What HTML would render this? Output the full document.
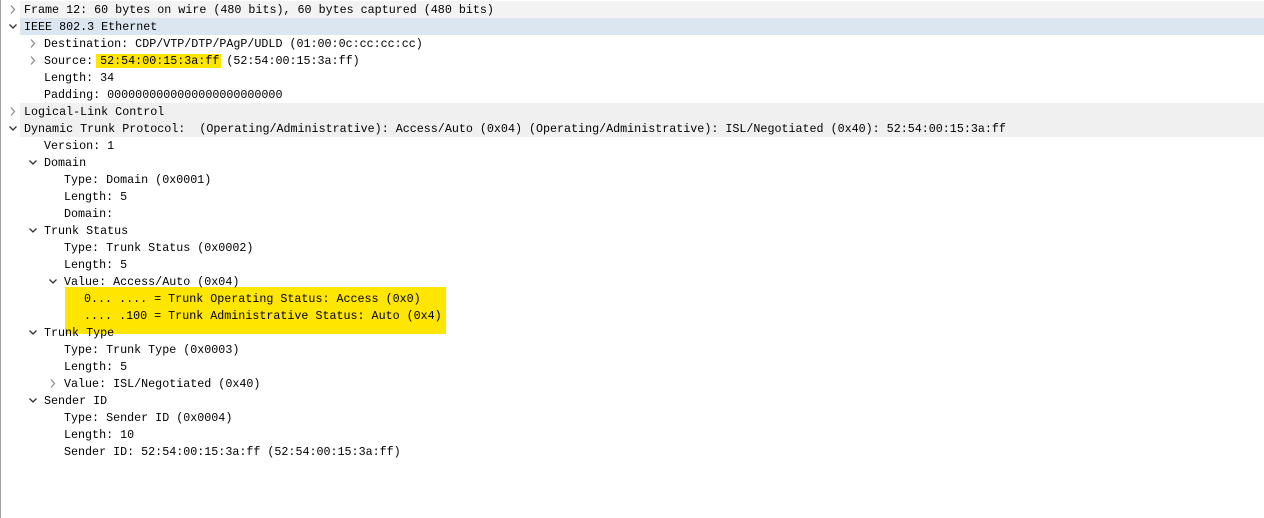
<!DOCTYPE html>
<html><head><style>
body{margin:0;width:1264px;height:518px;background:#fff;position:relative;overflow:hidden;font-family:"Liberation Mono",monospace;font-size:11.7px;color:#000}
.lb{position:absolute;left:0;top:0;width:1px;height:518px;background:#a0a0a0}
.r{position:absolute;left:0;height:17px;line-height:18px;white-space:pre;width:1264px}
.bg{position:absolute;left:20px;right:0;top:0;bottom:0}
.t{position:absolute;top:0}
.a{position:absolute;top:0;width:10px;height:17px}
.y{position:absolute;background:#ffe600}
</style></head><body>
<div class="lb"></div>
<div id="c"></div>
<div class="y" style="left:96px;top:54px;width:125px;height:14px;z-index:-1"></div>
<script>
var rows=[
[0,'Frame 12: 60 bytes on wire (480 bits), 60 bytes captured (480 bits)','c','#f3f3f3'],
[0,'IEEE 802.3 Ethernet','o','#dce6f0'],
[1,'Destination: CDP/VTP/DTP/PAgP/UDLD (01:00:0c:cc:cc:cc)','c'],
[1,'Source: <span style="background:#ffe600">52:54:00:15:3a:ff</span> (52:54:00:15:3a:ff)','c'],
[1,'Length: 34'],
[1,'Padding: 0000000000000000000000000'],
[0,'Logical-Link Control','c','#f0f0f0'],
[0,'Dynamic Trunk Protocol:  (Operating/Administrative): Access/Auto (0x04) (Operating/Administrative): ISL/Negotiated (0x40): 52:54:00:15:3a:ff','o','#f0f0f0'],
[1,'Version: 1'],
[1,'Domain','o'],
[2,'Type: Domain (0x0001)'],
[2,'Length: 5'],
[2,'Domain: '],
[1,'Trunk Status','o'],
[2,'Type: Trunk Status (0x0002)'],
[2,'Length: 5'],
[2,'Value: Access/Auto (0x04)','o'],
[3,'0... .... = Trunk Operating Status: Access (0x0)'],
[3,'.... .100 = Trunk Administrative Status: Auto (0x4)'],
[1,'Trunk Type','o'],
[2,'Type: Trunk Type (0x0003)'],
[2,'Length: 5'],
[2,'Value: ISL/Negotiated (0x40)','c'],
[1,'Sender ID','o'],
[2,'Type: Sender ID (0x0004)'],
[2,'Length: 10'],
[2,'Sender ID: 52:54:00:15:3a:ff (52:54:00:15:3a:ff)']
];
var h='<div class="y" style="left:65px;top:287px;width:381px;height:47px"></div>';
rows.forEach(function(r,i){
 var top=1+i*17, x=24+r[0]*20;
 h+='<div class="r" style="top:'+top+'px">';
 if(r[3])h+='<div class="bg" style="background:'+r[3]+'"></div>';
 if(r[2]){var ax=x-16;
  var p=r[2]=='c'?'M3 4.5L6.5 8.5L3 12.5':'M1.5 6.5L5 10L8.5 6.5';
  var col=r[2]=='c'?'#909090':'#303030';
  h+='<svg class="a" style="left:'+ax+'px" viewBox="0 0 10 17"><path d="'+p+'" fill="none" stroke="'+col+'" stroke-width="1.3"/></svg>';}
 h+='<span class="t" style="left:'+x+'px">'+r[1]+'</span></div>';
});
document.getElementById('c').innerHTML=h;
</script>
</body></html>
